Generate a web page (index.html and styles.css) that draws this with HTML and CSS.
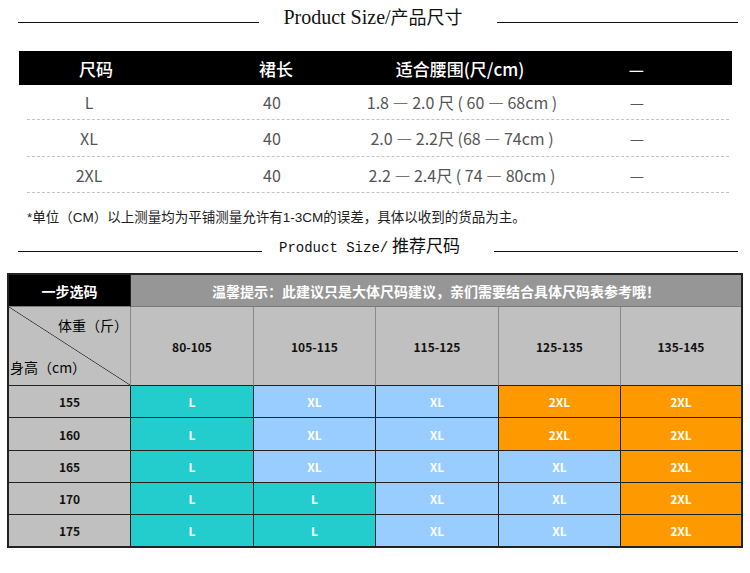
FILE: index.html
```html
<!DOCTYPE html>
<html lang="zh">
<head>
<meta charset="utf-8">
<title>Product Size</title>
<link rel="stylesheet" href="styles.css">
</head>
<body>
<section class="title title1">
  <span class="line"></span>
  <h2><span class="lat">Product Size/</span>产品尺寸</h2>
  <span class="line"></span>
</section>

<section class="size-table">
  <div class="thead">
    <div class="cell">尺码</div>
    <div class="cell">裙长</div>
    <div class="cell">适合腰围(尺/cm)</div>
    <div class="cell">—</div>
  </div>
  <div class="rows">
    <div class="row r1">
      <div class="cell">L</div>
      <div class="cell">40</div>
      <div class="cell">1.8 — 2.0 尺 ( 60 — 68cm )</div>
      <div class="cell dash">—</div>
    </div>
    <div class="row r2">
      <div class="cell">XL</div>
      <div class="cell">40</div>
      <div class="cell">2.0 — 2.2尺 (68 — 74cm )</div>
      <div class="cell dash">—</div>
    </div>
    <div class="row r3">
      <div class="cell">2XL</div>
      <div class="cell">40</div>
      <div class="cell">2.2 — 2.4尺 ( 74 — 80cm )</div>
      <div class="cell dash">—</div>
    </div>
  </div>
</section>

<p class="note">*单位（CM）以上测量均为平铺测量允许有1-3CM的误差，具体以收到的货品为主。</p>

<section class="title title2">
  <span class="line"></span>
  <h2><span class="mono">Product Size/</span> 推荐尺码</h2>
  <span class="line"></span>
</section>

<section class="rec">
  <div class="c head-black">一步选码</div>
  <div class="c head-tip">温馨提示：此建议只是大体尺码建议，亲们需要结合具体尺码表参考哦！</div>

  <div class="c diag"><span class="w">体重（斤）</span><span class="h">身高（cm）</span></div>
  <div class="c wt">80-105</div>
  <div class="c wt">105-115</div>
  <div class="c wt">115-125</div>
  <div class="c wt">125-135</div>
  <div class="c wt">135-145</div>

  <div class="c ht">155</div>
  <div class="c s-l">L</div>
  <div class="c s-xl">XL</div>
  <div class="c s-xl">XL</div>
  <div class="c s-2xl">2XL</div>
  <div class="c s-2xl">2XL</div>

  <div class="c ht">160</div>
  <div class="c s-l">L</div>
  <div class="c s-xl">XL</div>
  <div class="c s-xl">XL</div>
  <div class="c s-2xl">2XL</div>
  <div class="c s-2xl">2XL</div>

  <div class="c ht">165</div>
  <div class="c s-l">L</div>
  <div class="c s-xl">XL</div>
  <div class="c s-xl">XL</div>
  <div class="c s-xl">XL</div>
  <div class="c s-2xl">2XL</div>

  <div class="c ht">170</div>
  <div class="c s-l">L</div>
  <div class="c s-l">L</div>
  <div class="c s-xl">XL</div>
  <div class="c s-xl">XL</div>
  <div class="c s-2xl">2XL</div>

  <div class="c ht">175</div>
  <div class="c s-l">L</div>
  <div class="c s-l">L</div>
  <div class="c s-xl">XL</div>
  <div class="c s-xl">XL</div>
  <div class="c s-2xl">2XL</div>
</section>
</body>
</html>
```

FILE: styles.css
```css
* { box-sizing: border-box; }

html, body {
  margin: 0;
  padding: 0;
  background: #fff;
}

body {
  width: 750px;
  height: 573px;
  overflow: hidden;
  font-family: "Noto Sans CJK SC", "Noto Sans", sans-serif;
  color: #000;
}

/* ---------- section titles ---------- */
.title {
  display: flex;
  align-items: center;
  height: 34px;
  padding: 0 12px 0 18px;
}

.title .line {
  flex: 1;
  height: 1px;
  background: #111;
  margin-top: 10px;
}

.title h2 {
  margin: 0 34px 0 24px;
  font-weight: 400;
  line-height: 34px;
  white-space: nowrap;
  color: #111;
}

.title1 h2 {
  font-family: "Liberation Serif", "Noto Sans CJK SC", serif;
  font-size: 18px;
}

.title1 .lat {
  font-size: 20px;
}

.title2 {
  margin-top: 1px;
}

.title2 h2 {
  margin-left: 17px;
  font-family: "Noto Sans CJK SC", sans-serif;
  font-size: 17px;
}

.title2 .mono {
  font-family: "Liberation Mono", monospace;
  font-size: 14px;
}

/* ---------- size table ---------- */
.size-table {
  margin: 17px 18px 0 19px;
}

.thead {
  display: grid;
  grid-template-columns: 154px 206px 162px 191px;
  height: 34px;
  align-items: center;
  background: #000;
  color: #fff;
  font-size: 17px;
  font-weight: 500;
}

.thead .cell {
  text-align: center;
  white-space: nowrap;
}

.rows {
  margin: 0 3px 0 8px;
}

.row {
  display: grid;
  grid-template-columns: 124px 242px 138px 198px;
  align-items: center;
  border-bottom: 1px dashed #c4c4c4;
  font-size: 16px;
  color: #555;
}

.row.r1 { height: 35px; }
.row.r2 { height: 37px; }
.row.r3 { height: 36px; }

.row .cell {
  display: flex;
  justify-content: center;
  white-space: nowrap;
}

.row .dash {
  padding-left: 14px;
}

/* ---------- note ---------- */
.note {
  margin: 15px 0 0 27px;
  font-family: "Liberation Sans", "Noto Sans CJK SC", sans-serif;
  font-size: 13.5px;
  line-height: 20px;
  color: #222;
}

/* ---------- recommendation grid ---------- */
.rec {
  display: grid;
  width: 736px;
  margin: 10px 0 0 7px;
  grid-template-columns: 122px 123px 122px 123px 122px 120px;
  grid-template-rows: 32px 79px 32px 33px 32px 32px 31px;
  border: 2px solid #222;
  font-family: "Noto Sans CJK SC", sans-serif;
  font-weight: 700;
  font-size: 12px;
}

.rec .c {
  display: flex;
  align-items: center;
  justify-content: center;
  border-right: 1px solid #222;
  border-bottom: 1px solid #222;
  white-space: nowrap;
}

.rec .c:nth-child(6n+2) {
  border-right: 0;
}

.rec .c:nth-last-child(-n+6) {
  border-bottom: 0;
}

.head-black {
  background: #000;
  color: #fff;
  font-size: 14px;
  border-bottom-color: #7a7a7a !important;
}

.head-tip {
  grid-column: span 5;
  background: #969696;
  color: #fff;
  font-size: 14px;
  border-bottom-color: #7a7a7a !important;
}

.diag {
  position: relative;
  flex-direction: column;
  align-items: stretch !important;
  justify-content: space-between !important;
  background:
    linear-gradient(to top right, transparent calc(50% - 0.7px), #333 50%, transparent calc(50% + 0.7px)),
    #c0c0c0;
  font-weight: 400;
  font-size: 14px;
  padding: 8px 2px 8px 1px;
  border-right-color: #8a8a8a !important;
}

.diag .w {
  text-align: right;
}

.diag .h {
  text-align: left;
}

.wt {
  background: #c0c0c0;
  color: #111;
  border-right-color: #8a8a8a !important;
}

.ht {
  background: #c0c0c0;
  color: #111;
}

.s-l {
  background: #24cdcd;
  color: #fff;
}

.s-xl {
  background: #99ccff;
  color: #fff;
}

.s-2xl {
  background: #ff9900;
  color: #fff;
}
```
